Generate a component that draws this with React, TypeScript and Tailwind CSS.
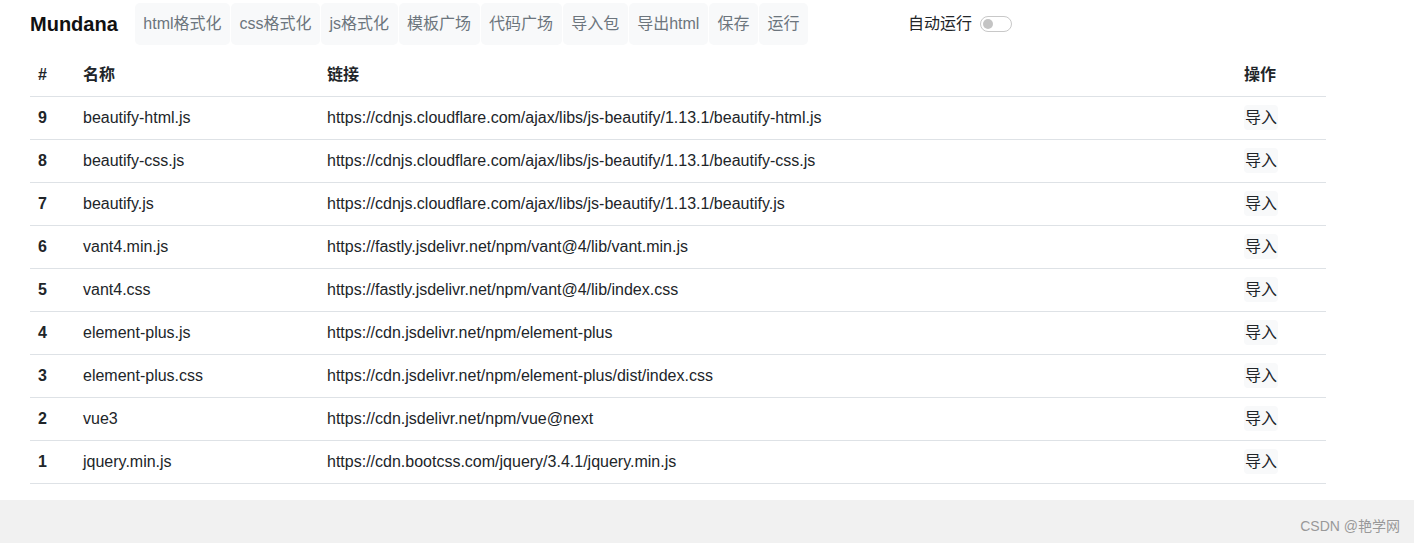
const navItems = ['html格式化', 'css格式化', 'js格式化', '模板广场', '代码广场', '导入包', '导出html', '保存', '运行']

const rows = [
  { id: 9, name: 'beautify-html.js', url: 'https://cdnjs.cloudflare.com/ajax/libs/js-beautify/1.13.1/beautify-html.js' },
  { id: 8, name: 'beautify-css.js', url: 'https://cdnjs.cloudflare.com/ajax/libs/js-beautify/1.13.1/beautify-css.js' },
  { id: 7, name: 'beautify.js', url: 'https://cdnjs.cloudflare.com/ajax/libs/js-beautify/1.13.1/beautify.js' },
  { id: 6, name: 'vant4.min.js', url: 'https://fastly.jsdelivr.net/npm/vant@4/lib/vant.min.js' },
  { id: 5, name: 'vant4.css', url: 'https://fastly.jsdelivr.net/npm/vant@4/lib/index.css' },
  { id: 4, name: 'element-plus.js', url: 'https://cdn.jsdelivr.net/npm/element-plus' },
  { id: 3, name: 'element-plus.css', url: 'https://cdn.jsdelivr.net/npm/element-plus/dist/index.css' },
  { id: 2, name: 'vue3', url: 'https://cdn.jsdelivr.net/npm/vue@next' },
  { id: 1, name: 'jquery.min.js', url: 'https://cdn.bootcss.com/jquery/3.4.1/jquery.min.js' },
]

export default function App() {
  return (
    <div className="flex h-[543px] flex-col bg-white font-['Liberation_Sans','Noto_Sans_CJK_SC',sans-serif] text-[16px] text-[#212529]">
      <div className="h-[500px] px-[30px]">
        {/* Top bar */}
        <div className="flex h-[53px] items-start pt-[3px]">
          <div className="mr-[17px] flex h-[42px] items-center text-[20px] font-bold text-[#111]">Mundana</div>
          <div className="flex gap-px">
            {navItems.map((item) => (
              <button
                key={item}
                className="h-[42px] rounded-[5px] bg-[#f8f9fa] px-[8.5px] text-[16px] text-[#6c757d]"
              >
                {item}
              </button>
            ))}
          </div>
          <div className="ml-[100px] flex h-[42px] items-center">
            <span className="text-[#212529]">自动运行</span>
            <div className="ml-[8px] flex h-[16px] w-[32px] items-center rounded-full border border-[#c8c8c8] px-[2px]">
              <div className="h-[10px] w-[10px] rounded-full bg-[#c4c4c4]" />
            </div>
          </div>
        </div>

        {/* Table */}
        <table className="w-[1296px] border-collapse text-left">
          <thead>
            <tr className="h-[43px] border-b border-[#dee2e6]">
              <th className="w-[45px] px-[8px] pt-[1px] font-bold">#</th>
              <th className="w-[244px] px-[8px] pt-[1px] font-bold">名称</th>
              <th className="px-[8px] pt-[1px] font-bold">链接</th>
              <th className="w-[90px] px-[8px] pt-[1px] font-bold">操作</th>
            </tr>
          </thead>
          <tbody>
            {rows.map((r) => (
              <tr key={r.id} className="h-[43px] border-b border-[#dee2e6]">
                <td className="px-[8px] font-bold">{r.id}</td>
                <td className="px-[8px]">{r.name}</td>
                <td className="px-[8px]">{r.url}</td>
                <td className="px-[8px]">
                  <button className="h-[25px] rounded-[4px] bg-[#f8f9fa] px-px text-[16px] text-[#212529]">导入</button>
                </td>
              </tr>
            ))}
          </tbody>
        </table>
      </div>

      {/* Footer strip */}
      <div className="flex flex-1 items-center justify-end bg-[#f1f1f1] pr-[14px] pt-[10px] text-[14px] text-[#999]">
        CSDN @艳学网
      </div>
    </div>
  )
}
